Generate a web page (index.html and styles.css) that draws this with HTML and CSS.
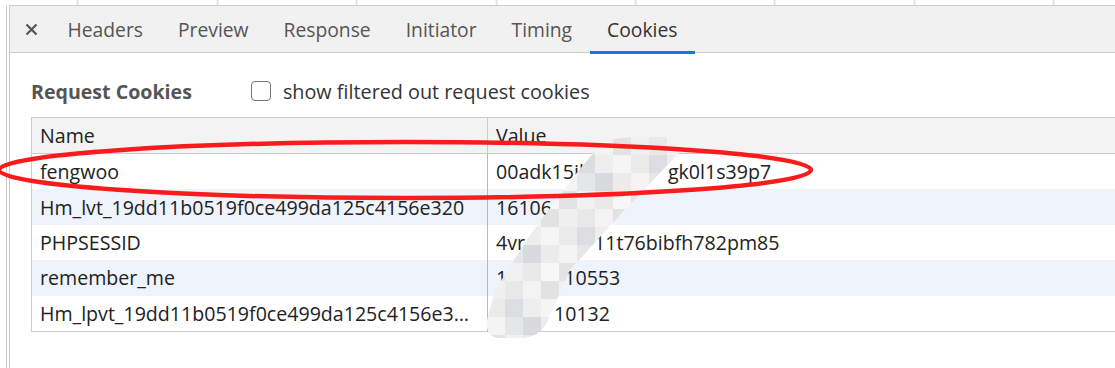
FILE: index.html
```html
<!DOCTYPE html>
<html lang="en">
<head>
    <meta charset="UTF-8">
    <title>Cookies</title>
    <link rel="stylesheet" href="styles.css">
</head>
<body>

<div class="top-strip"></div>

<div class="main">
    <div class="side"></div>
    <div class="panel">
        <div class="tabbar">
            <svg class="close" width="13" height="13" viewBox="0 0 13 13">
                <path d="M1.5 1.5 L11.5 11.5 M11.5 1.5 L1.5 11.5" stroke="#555" stroke-width="2.2" fill="none"/>
            </svg>
            <div class="tab">Headers</div>
            <div class="tab">Preview</div>
            <div class="tab">Response</div>
            <div class="tab">Initiator</div>
            <div class="tab">Timing</div>
            <div class="tab active">Cookies</div>
        </div>

        <div class="content">
            <div class="section-head">
                <h3>Request Cookies</h3>
                <label class="filter"><span class="box"></span>show filtered out request cookies</label>
            </div>

            <table class="cookies">
                <colgroup>
                    <col class="col-name">
                    <col>
                </colgroup>
                <thead>
                    <tr><th class="name">Name</th><th>Value</th></tr>
                </thead>
                <tbody>
                    <tr>
                        <td class="name">fengwoo</td>
                        <td>00adk15jb<span class="gap g1"></span>gk0l1s39p7</td>
                    </tr>
                    <tr class="alt">
                        <td class="name">Hm_lvt_19dd11b0519f0ce499da125c4156e320</td>
                        <td>161066</td>
                    </tr>
                    <tr>
                        <td class="name">PHPSESSID</td>
                        <td>4vr<span class="gap g3"></span>11t76bibfh782pm85</td>
                    </tr>
                    <tr class="alt">
                        <td class="name">remember_me</td>
                        <td>1<span class="gap g4"></span>10553</td>
                    </tr>
                    <tr>
                        <td class="name">Hm_lpvt_19dd11b0519f0ce499da125c4156e320</td>
                        <td><span class="gap g5"></span>10132</td>
                    </tr>
                </tbody>
            </table>
        </div>
    </div>
</div>

<!-- mosaic + red marker drawn on top of the screenshot -->
<svg class="overlay" width="1115" height="368" viewBox="0 0 1115 368">
    <defs>
        <pattern id="mosaic" patternUnits="userSpaceOnUse" x="487" y="137" width="72" height="72">
            <rect x="0" y="0" width="18" height="18" fill="#f0f0f0"/>
            <rect x="18" y="0" width="18" height="18" fill="#e8e8e8"/>
            <rect x="36" y="0" width="18" height="18" fill="#f3f3f3"/>
            <rect x="54" y="0" width="18" height="18" fill="#e2e2e2"/>
            <rect x="0" y="18" width="18" height="18" fill="#ebebeb"/>
            <rect x="18" y="18" width="18" height="18" fill="#dcdde0"/>
            <rect x="36" y="18" width="18" height="18" fill="#eeeeee"/>
            <rect x="54" y="18" width="18" height="18" fill="#f5f5f5"/>
            <rect x="0" y="36" width="18" height="18" fill="#f4f4f4"/>
            <rect x="18" y="36" width="18" height="18" fill="#e5e6e8"/>
            <rect x="36" y="36" width="18" height="18" fill="#d9dadd"/>
            <rect x="54" y="36" width="18" height="18" fill="#ececec"/>
            <rect x="0" y="54" width="18" height="18" fill="#e3e3e3"/>
            <rect x="18" y="54" width="18" height="18" fill="#f1f1f1"/>
            <rect x="36" y="54" width="18" height="18" fill="#e9e9e9"/>
            <rect x="54" y="54" width="18" height="18" fill="#f7f7f7"/>
        </pattern>
    </defs>
    <path d="M600 145 Q610 137 640 137 L672 137 Q690 140 680 152 L620 215 L570 270 L548 320 Q540 338 520 338 L498 338 Q485 336 487 320 L495 290 L530 235 L575 175 Z" fill="url(#mosaic)"/>
    <ellipse cx="405" cy="170" rx="406" ry="28" fill="none" stroke="#fb1b1b" stroke-width="4.5"/>
</svg>

</body>
</html>
```

FILE: styles.css
```css
body {
    margin: 0;
    width: 1115px;
    height: 368px;
    overflow: hidden;
    position: relative;
    background-color: #fff;
    font-family: "Open Sans", "Noto Sans", Arial, sans-serif;
}
.top-strip {
    height: 5px;
    background-image: repeating-linear-gradient(to right, transparent 0, transparent 137.4px, #e3e3e3 137.4px, #e3e3e3 139.4px);
    background-position: -60.4px 0;
}
.main {
    display: flex;
    height: 363px;
}
.side {
    width: 6px;
    border-right: 1px solid #ccc;
    margin-right: 2px;
}
.panel {
    flex: 1;
    border-left: 1px solid #ccc;
    min-width: 0;
}
/* tab strip */
.tabbar {
    display: flex;
    align-items: center;
    height: 46px;
    padding-left: 15px;
    background-color: #f1f1f1;
    border-top: 1px solid #ccc;
    border-bottom: 1px solid #ccc;
}
.close {
    margin-right: 12px;
}
.tab {
    position: relative;
    height: 100%;
    display: flex;
    align-items: center;
    padding: 0 17.5px;
    font-size: 19.3px;
    color: #555;
}
.tab.active {
    color: #333;
}
.tab.active::after {
    content: "";
    position: absolute;
    left: 0;
    right: 0;
    bottom: -2px;
    height: 3px;
    background-color: #1a73e8;
}
/* cookies view */
.content {
    padding: 19px 0 0 21px;
}
.section-head {
    display: flex;
    align-items: center;
    height: 38px;
    margin-bottom: 7px;
}
.section-head h3 {
    margin: 0;
    font-size: 19.6px;
    font-weight: 700;
    color: #555;
}
.filter {
    display: flex;
    align-items: center;
    margin-left: 59px;
    font-size: 19.8px;
    color: #333;
}
.box {
    width: 18px;
    height: 18px;
    margin-right: 12px;
    border: 1px solid #767676;
    border-radius: 4px;
    background-color: #fff;
}
.cookies {
    border-collapse: collapse;
    table-layout: fixed;
    width: 1100px;
    border: 1px solid #ccc;
    font-size: 19.6px;
    color: #222;
}
.col-name {
    width: 456px;
}
.cookies th {
    height: 35px;
    padding: 0 8px;
    text-align: left;
    font-weight: 400;
    background-color: #f3f3f3;
    border-bottom: 1px solid #ccc;
}
.cookies td {
    height: 35.4px;
    padding: 0 8px;
    white-space: nowrap;
    overflow: hidden;
    text-overflow: ellipsis;
}
.cookies th.name {
    border-right: 1px solid #ccc;
}
.cookies td.name {
    padding-right: 16px;
    border-right: 1px solid #b8b8b8;
}
.cookies tr.alt td {
    background-color: #eff4fc;
}
.gap {
    display: inline-block;
}
.g1 { width: 77px; }
.g3 { width: 69px; }
.g4 { width: 57px; }
.g5 { width: 58px; }
.overlay {
    position: absolute;
    top: 0;
    left: 0;
    pointer-events: none;
}
```
